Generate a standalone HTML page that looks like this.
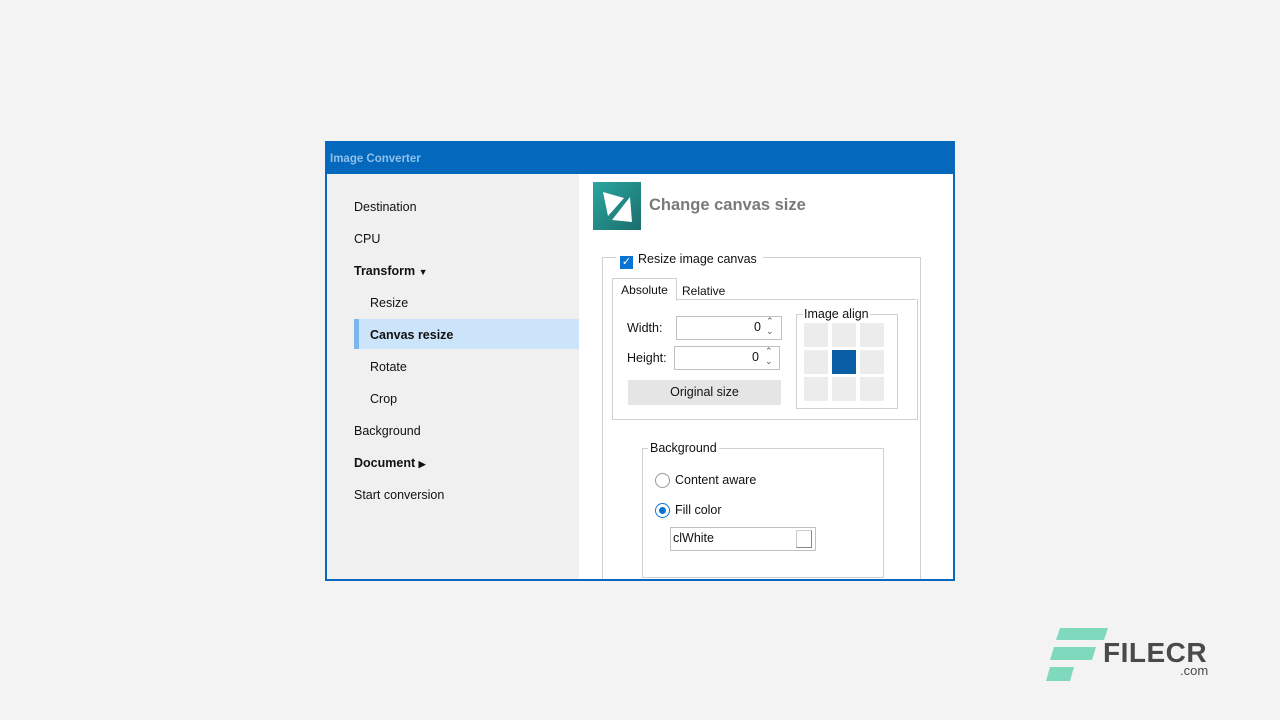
<!DOCTYPE html>
<html><head><meta charset="utf-8"><style>
body{margin:0;width:1280px;height:720px;background:#f3f3f3;position:relative;overflow:hidden;font-family:"Liberation Sans",sans-serif;font-size:12.5px;color:#111}
.a{position:absolute}
.win{left:325px;top:141px;width:626px;height:437px;border:2px solid #0868bd;border-top:1px solid #0868bd;background:#fff;overflow:hidden}
.title{left:0;top:0;width:628px;height:32px;background:#0468bc;color:#8fc0ea;font-weight:bold;font-size:11.5px;line-height:34px;padding-left:3px;box-sizing:border-box}
.left{left:0;top:32px;width:252px;height:405px;background:#f0f0f0}
.it{position:absolute;left:27px}
.sub{left:43px}
.b{font-weight:bold}
.box{border:1px solid #d0d0d0}
.cell{position:absolute;width:24px;height:24px;background:#ececec}
</style></head><body>
<div class="a win">
 <div class="a title">Image Converter</div>
 <div class="a left">
  <div class="it" style="top:26px">Destination</div>
  <div class="it" style="top:58px">CPU</div>
  <div class="it b" style="top:90px">Transform <span style="font-size:9px">&#9660;</span></div>
  <div class="it sub" style="top:122px">Resize</div>
  <div class="a" style="left:27px;top:145px;width:225px;height:30px;background:#cce4fa;border-left:5px solid #7ab8ec;box-sizing:border-box"></div>
  <div class="it sub b" style="top:154px">Canvas resize</div>
  <div class="it sub" style="top:186px">Rotate</div>
  <div class="it sub" style="top:218px">Crop</div>
  <div class="it" style="top:250px">Background</div>
  <div class="it b" style="top:282px">Document <span style="font-size:9px">&#9654;</span></div>
  <div class="it" style="top:314px">Start conversion</div>
 </div>
 <svg class="a" style="left:266px;top:40px" width="48" height="48"><defs><linearGradient id="g" x1="0" y1="0" x2="1" y2="1"><stop offset="0" stop-color="#2aa6a0"/><stop offset="1" stop-color="#1b6e6c"/></linearGradient></defs><rect width="48" height="48" fill="url(#g)"/><polygon points="10,10 31,16 15,34" fill="#fff"/><polygon points="37,15 39,40 19,38" fill="#fff"/></svg>
 <div class="a b" style="left:322px;top:54px;font-size:16.5px;color:#7a7a7a">Change canvas size</div>
 <div class="a box" style="left:275px;top:115px;width:317px;height:330px"></div>
 <div class="a" style="left:289px;top:108px;background:#fff;padding:0 6px 0 4px;height:18px;line-height:18px"><span style="display:inline-block;width:13px;height:13px;background:#0a74d4;color:#fff;font-size:11px;line-height:13px;text-align:center;vertical-align:-2px;margin-right:5px">&#10003;</span>Resize image canvas</div>
 <div class="a" style="left:285px;top:157px;width:304px;height:120px;border:1px solid #d0d0d0;border-top:none"></div>
 <div class="a" style="left:285px;top:157px;width:304px;border-top:1px solid #d0d0d0"></div>
 <div class="a" style="left:285px;top:136px;width:63px;height:22px;border:1px solid #d0d0d0;border-bottom:none;background:#fff;text-align:center;line-height:22px;font-size:12px">Absolute</div>
 <div class="a" style="left:355px;top:142px;font-size:12px">Relative</div>
 <div class="a" style="left:300px;top:179px">Width:</div>
 <div class="a box" style="left:349px;top:174px;width:104px;height:22px;border-color:#c0c0c0"></div>
 <div class="a" style="left:427px;top:178px">0</div>
 <div class="a" style="left:439px;top:174px;font-size:9px;color:#555;line-height:10px">&#8963;<br>&#8964;</div>
 <div class="a" style="left:300px;top:209px">Height:</div>
 <div class="a box" style="left:347px;top:204px;width:104px;height:22px;border-color:#c0c0c0"></div>
 <div class="a" style="left:425px;top:208px">0</div>
 <div class="a" style="left:438px;top:204px;font-size:9px;color:#555;line-height:10px">&#8963;<br>&#8964;</div>
 <div class="a" style="left:301px;top:238px;width:153px;height:25px;background:#e5e5e5;text-align:center;line-height:25px">Original size</div>
 <div class="a box" style="left:469px;top:172px;width:100px;height:93px"></div>
 <div class="a" style="left:476px;top:165px;background:#fff;padding:0 1px">Image align</div>
 <div class="cell" style="left:477px;top:181px"></div><div class="cell" style="left:505px;top:181px"></div><div class="cell" style="left:533px;top:181px"></div>
 <div class="cell" style="left:477px;top:208px"></div><div class="cell" style="left:505px;top:208px;background:#0a5ea6"></div><div class="cell" style="left:533px;top:208px"></div>
 <div class="cell" style="left:477px;top:235px"></div><div class="cell" style="left:505px;top:235px"></div><div class="cell" style="left:533px;top:235px"></div>
 <div class="a box" style="left:315px;top:306px;width:240px;height:128px"></div>
 <div class="a" style="left:321px;top:299px;background:#fff;padding:0 2px">Background</div>
 <div class="a" style="left:328px;top:331px;width:13px;height:13px;border:1px solid #999;border-radius:50%"></div>
 <div class="a" style="left:348px;top:331px">Content aware</div>
 <div class="a" style="left:328px;top:361px;width:13px;height:13px;border:1px solid #0a74d4;border-radius:50%"></div>
 <div class="a" style="left:332px;top:365px;width:7px;height:7px;background:#0a74d4;border-radius:50%"></div>
 <div class="a" style="left:348px;top:361px">Fill color</div>
 <div class="a box" style="left:343px;top:385px;width:144px;height:22px;border-color:#c0c0c0"></div>
 <div class="a" style="left:346px;top:389px">clWhite</div>
 <div class="a" style="left:469px;top:388px;width:14px;height:16px;border:1px solid #888;border-top-color:#ccc;border-left-color:#ccc"></div>
</div>
<svg class="a" style="left:1046px;top:628px" width="62" height="54"><polygon points="14,0 62,0 58,12 10,12" fill="#7fd9bd"/><polygon points="8,19 50,19 46,32 4,32" fill="#7fd9bd"/><polygon points="4,39 28,39 24,53 0,53" fill="#7fd9bd"/></svg>
<div class="a" style="left:1103px;top:637px;font-size:28px;font-weight:bold;color:#4a4a4a;letter-spacing:0.5px">FILECR</div>
<div class="a" style="left:1180px;top:663px;font-size:13px;color:#4a4a4a">.com</div>
</body></html>
